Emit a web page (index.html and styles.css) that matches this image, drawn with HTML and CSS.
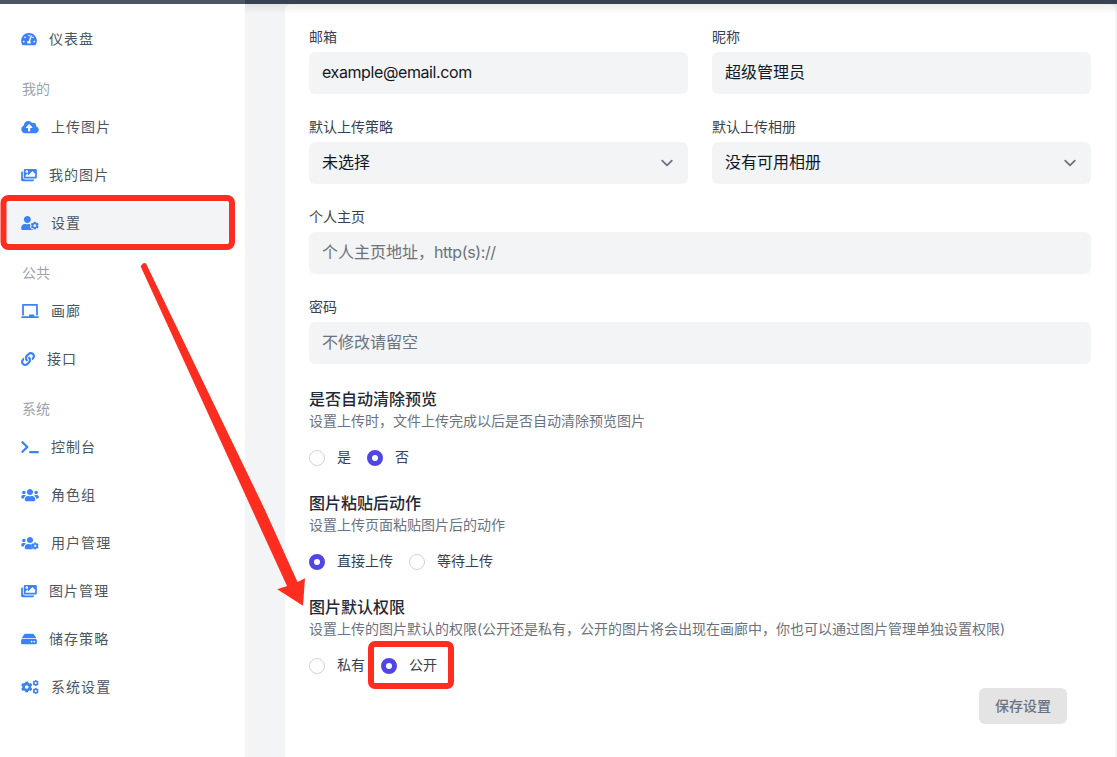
FILE: index.html
```html
<!DOCTYPE html>
<html lang="zh">
<head>
<meta charset="utf-8">
<title>设置</title>
<link rel="stylesheet" href="styles.css">
</head>
<body>
<svg class="defs" width="0" height="0" aria-hidden="true">
  <defs>
    <symbol id="gear" viewBox="352 208 288 288"><path d="M610.5 373.3c2.6-14.1 2.6-28.5 0-42.6l25.8-14.9c3-1.7 4.3-5.2 3.3-8.5-6.7-21.6-18.2-41.2-33.2-57.4-2.3-2.5-6-3.1-9-1.4l-25.8 14.9c-10.9-9.3-23.4-16.5-36.9-21.3v-29.8c0-3.4-2.4-6.4-5.7-7.1-22.3-5-45-4.8-66.2 0-3.3.7-5.7 3.7-5.7 7.1v29.8c-13.5 4.8-26 12-36.9 21.3l-25.8-14.9c-2.9-1.7-6.7-1.1-9 1.4-15 16.2-26.5 35.8-33.2 57.4-1 3.3.4 6.8 3.3 8.5l25.8 14.9c-2.6 14.1-2.6 28.5 0 42.6l-25.8 14.9c-3 1.7-4.3 5.2-3.3 8.5 6.7 21.6 18.2 41.1 33.2 57.4 2.3 2.5 6 3.1 9 1.4l25.8-14.9c10.9 9.3 23.4 16.5 36.9 21.3v29.8c0 3.4 2.4 6.4 5.7 7.1 22.3 5 45 4.8 66.2 0 3.3-.7 5.7-3.7 5.7-7.1v-29.8c13.5-4.8 26-12 36.9-21.3l25.8 14.9c2.9 1.7 6.7 1.1 9-1.4 15-16.2 26.5-35.8 33.2-57.4 1-3.3-.4-6.8-3.3-8.5l-25.8-14.9zM496 400.5c-26.8 0-48.5-21.8-48.5-48.5s21.8-48.5 48.5-48.5 48.5 21.8 48.5 48.5-21.7 48.5-48.5 48.5z"/></symbol>
    <symbol id="images" viewBox="0 0 576 512"><path d="M480 416v16c0 26.51-21.49 48-48 48H48c-26.51 0-48-21.49-48-48V176c0-26.51 21.49-48 48-48h16v208c0 44.112 35.888 80 80 80h336zm96-80V80c0-26.51-21.49-48-48-48H144c-26.51 0-48 21.49-48 48v256c0 26.51 21.49 48 48 48h384c26.51 0 48-21.49 48-48zM256 128c0 26.51-21.49 48-48 48s-48-21.49-48-48 21.49-48 48-48 48 21.49 48 48zm-96 144l55.515-55.515c4.686-4.686 12.284-4.686 16.971 0L272 256l135.515-135.515c4.686-4.686 12.284-4.686 16.971 0L512 208v112H160v-48z"/></symbol>
    <symbol id="chevron" viewBox="0 0 20 20"><path d="M6 8l4 4 4-4" fill="none" stroke="#6b7280" stroke-width="1.5" stroke-linecap="round" stroke-linejoin="round"/></symbol>
  </defs>
</svg>

<div class="topbar"><div class="topbar-left"></div><div class="topbar-right"></div></div>

<div class="shell">
  <aside class="sidebar">
    <a class="nav-item">
      <svg class="icon w16" viewBox="0 0 576 512"><path d="M288 32C128.94 32 0 160.94 0 320c0 52.8 14.25 102.26 39.06 144.8 5.61 9.62 16.3 15.2 27.44 15.2h443c11.14 0 21.83-5.58 27.44-15.2C561.75 422.26 576 372.8 576 320c0-159.06-128.94-288-288-288zm0 64c14.71 0 26.58 10.13 30.32 23.65-1.11 2.26-2.64 4.23-3.45 6.67l-9.22 27.67c-5.13 3.49-10.97 6.01-17.64 6.01-17.67 0-32-14.33-32-32S270.33 96 288 96zM96 384c-17.67 0-32-14.33-32-32s14.33-32 32-32 32 14.33 32 32-14.33 32-32 32zm48-160c-17.67 0-32-14.33-32-32s14.33-32 32-32 32 14.33 32 32-14.33 32-32 32zm246.77-72.41l-61.33 184C343.13 347.33 352 364.54 352 384c0 11.72-3.38 22.55-8.88 32H232.88c-5.5-9.45-8.88-20.28-8.88-32 0-33.94 26.5-61.43 59.9-63.59l61.34-184.01c4.17-12.56 17.73-19.45 30.36-15.17 12.57 4.19 19.35 17.79 15.17 30.36zm14.66 57.2l15.52-46.55c3.47-1.29 7.13-2.23 11.05-2.23 17.67 0 32 14.33 32 32s-14.33 32-32 32c-11.38-.01-20.89-6.28-26.57-15.22zM480 384c-17.67 0-32-14.33-32-32s14.33-32 32-32 32 14.33 32 32-14.33 32-32 32z"/></svg>
      <span>仪表盘</span>
    </a>
    <div class="nav-heading">我的</div>
    <a class="nav-item">
      <svg class="icon w18" viewBox="0 0 640 512"><path d="M537.6 226.6c4.1-10.7 6.4-22.4 6.4-34.6 0-53-43-96-96-96-19.7 0-38.1 6-53.3 16.2C367 64.2 315.3 32 256 32c-88.4 0-160 71.6-160 160 0 2.7.1 5.4.2 8.1C40.2 219.8 0 273.2 0 336c0 79.5 64.5 144 144 144h368c70.7 0 128-57.3 128-128 0-61.9-44-113.6-102.4-125.4zM393.4 288H328v112c0 8.8-7.2 16-16 16h-48c-8.8 0-16-7.2-16-16V288h-65.4c-14.3 0-21.4-17.2-11.3-27.3l105.4-105.4c6.2-6.2 16.4-6.2 22.6 0l105.4 105.4c10.1 10.1 2.9 27.3-11.3 27.3z"/></svg>
      <span>上传图片</span>
    </a>
    <a class="nav-item">
      <svg class="icon w16"><use href="#images"/></svg>
      <span>我的图片</span>
    </a>
    <a class="nav-item active">
      <svg class="icon w18" viewBox="0 0 640 512"><path d="M224 256c70.7 0 128-57.3 128-128S294.7 0 224 0 96 57.3 96 128s57.3 128 128 128zm201.2 226.5c-2.3-1.2-4.6-2.6-6.8-3.9l-7.9 4.6c-6 3.4-12.8 5.3-19.6 5.3-10.9 0-21.4-4.6-28.9-12.6-18.3-19.8-32.3-43.9-40.2-69.6-5.5-17.7 1.9-36.4 17.9-45.7l7.9-4.6c-.1-2.6-.1-5.2 0-7.8l-7.9-4.6c-16-9.2-23.4-28-17.9-45.7.9-2.9 2.2-5.8 3.2-8.7-3.8-.3-7.5-1.2-11.4-1.2h-16.7c-22.2 10.2-46.9 16-72.9 16s-50.6-5.8-72.9-16h-16.7C60.2 288 0 348.2 0 422.4V464c0 26.5 21.5 48 48 48h352c10.1 0 19.5-3.2 27.2-8.5-1.2-3.8-2-7.7-2-11.8v-9.2z"/><use href="#gear" x="352" y="208" width="288" height="288"/></svg>
      <span>设置</span>
    </a>
    <div class="nav-heading">公共</div>
    <a class="nav-item">
      <svg class="icon w18" viewBox="0 0 640 512"><path d="M96 64h448v352h64V40c0-22.06-17.94-40-40-40H72C49.94 0 32 17.94 32 40v376h64V64zm528 384H480v-64H288v64H16c-8.84 0-16 7.16-16 16v32c0 8.84 7.16 16 16 16h608c8.84 0 16-7.16 16-16v-32c0-8.84-7.16-16-16-16z"/></svg>
      <span>画廊</span>
    </a>
    <a class="nav-item">
      <svg class="icon w14" viewBox="0 0 512 512"><path d="M326.612 185.391c59.747 59.809 58.927 155.698.36 214.59-.11.12-.24.25-.36.37l-67.2 67.2c-59.27 59.27-155.699 59.262-214.96 0-59.27-59.26-59.27-155.7 0-214.96l37.106-37.106c9.84-9.84 26.786-3.3 27.294 10.606.648 17.722 3.826 35.527 9.69 52.721 1.986 5.822.567 12.262-3.783 16.612l-13.087 13.087c-28.026 28.026-28.905 73.66-1.155 101.96 28.024 28.579 74.086 28.749 102.325.51l67.2-67.19c28.191-28.191 28.073-73.757 0-101.83-3.701-3.694-7.429-6.564-10.341-8.569a16.037 16.037 0 0 1-6.947-12.606c-.396-10.567 3.348-21.456 11.698-29.806l21.054-21.055c5.521-5.521 14.182-6.199 20.584-1.731a152.482 152.482 0 0 1 20.522 17.197zM467.547 44.449c-59.261-59.262-155.69-59.27-214.96 0l-67.2 67.2c-.12.12-.25.25-.36.37-58.566 58.892-59.387 154.781.36 214.59a152.454 152.454 0 0 0 20.521 17.196c6.402 4.468 15.064 3.789 20.584-1.731l21.054-21.055c8.35-8.35 12.094-19.239 11.698-29.806a16.037 16.037 0 0 0-6.947-12.606c-2.912-2.005-6.64-4.875-10.341-8.569-28.073-28.073-28.191-73.639 0-101.83l67.2-67.19c28.239-28.239 74.3-28.069 102.325.51 27.75 28.3 26.872 73.934-1.155 101.96l-13.087 13.087c-4.35 4.35-5.769 10.79-3.783 16.612 5.864 17.194 9.042 34.999 9.69 52.721.509 13.906 17.454 20.446 27.294 10.606l37.106-37.106c59.271-59.259 59.271-155.699.001-214.959z"/></svg>
      <span>接口</span>
    </a>
    <div class="nav-heading">系统</div>
    <a class="nav-item">
      <svg class="icon w18" viewBox="0 0 640 512"><path d="M257.981 272.971L63.638 467.314c-9.373 9.373-24.569 9.373-33.941 0L7.029 444.647c-9.357-9.357-9.375-24.522-.04-33.901L161.011 256 6.99 101.255c-9.335-9.379-9.317-24.544.04-33.901l22.667-22.667c9.373-9.373 24.569-9.373 33.941 0L257.981 239.03c9.373 9.372 9.373 24.568 0 33.941zM640 456v-32c0-13.255-10.745-24-24-24H312c-13.255 0-24 10.745-24 24v32c0 13.255 10.745 24 24 24h304c13.255 0 24-10.745 24-24z"/></svg>
      <span>控制台</span>
    </a>
    <a class="nav-item">
      <svg class="icon w18" viewBox="0 0 640 512"><path d="M96 224c35.3 0 64-28.7 64-64s-28.7-64-64-64-64 28.7-64 64 28.7 64 64 64zm448 0c35.3 0 64-28.7 64-64s-28.7-64-64-64-64 28.7-64 64 28.7 64 64 64zm32 32h-64c-17.6 0-33.5 7.1-45.1 18.6 40.3 22.1 68.9 62 75.1 109.4h66c17.7 0 32-14.3 32-32v-32c0-35.3-28.7-64-64-64zm-256 0c61.9 0 112-50.1 112-112S381.9 32 320 32 208 82.1 208 144s50.1 112 112 112zm76.8 32h-8.3c-20.8 10-43.9 16-68.5 16s-47.6-6-68.5-16h-8.3C179.6 288 128 339.6 128 403.2V432c0 26.5 21.5 48 48 48h288c26.5 0 48-21.5 48-48v-28.8c0-63.6-51.6-115.2-115.2-115.2zm-223.7-13.4C161.5 263.1 145.6 256 128 256H64c-35.3 0-64 28.7-64 64v32c0 17.7 14.3 32 32 32h65.9c6.3-47.4 34.9-87.3 75.2-109.4z"/></svg>
      <span>角色组</span>
    </a>
    <a class="nav-item">
      <svg class="icon w18" viewBox="0 0 640 512"><path d="M96 224c35.3 0 64-28.7 64-64s-28.7-64-64-64-64 28.7-64 64 28.7 64 64 64zm-32 32c-35.3 0-64 28.7-64 64v32c0 17.7 14.3 32 32 32h65.9c6.3-47.4 34.9-87.3 75.2-109.4C161.5 263.1 145.6 256 128 256H64z"/><path d="M320 256c61.9 0 112-50.1 112-112S381.9 32 320 32 208 82.1 208 144s50.1 112 112 112zm76.8 32h-8.3c-20.8 10-43.9 16-68.5 16s-47.6-6-68.5-16h-8.3C179.6 288 128 339.6 128 403.2V432c0 26.5 21.5 48 48 48h288c26.5 0 48-21.5 48-48v-28.8c0-63.6-51.6-115.2-115.2-115.2z"/><use class="gear-cut" href="#gear" x="376" y="232" width="264" height="264"/></svg>
      <span>用户管理</span>
    </a>
    <a class="nav-item">
      <svg class="icon w16"><use href="#images"/></svg>
      <span>图片管理</span>
    </a>
    <a class="nav-item">
      <svg class="icon w16" viewBox="0 0 576 512"><path d="M576 304v96c0 26.51-21.49 48-48 48H48c-26.51 0-48-21.49-48-48v-96c0-26.51 21.49-48 48-48h480c26.51 0 48 21.49 48 48zm-48-80a79.557 79.557 0 0 1 30.777 6.165L462.25 85.374A48.003 48.003 0 0 0 422.311 64H153.689a48 48 0 0 0-39.938 21.374L17.223 230.165A79.557 79.557 0 0 1 48 224h480zm-48 96c-17.673 0-32 14.327-32 32s14.327 32 32 32 32-14.327 32-32-14.327-32-32-32zm-96 0c-17.673 0-32 14.327-32 32s14.327 32 32 32 32-14.327 32-32-14.327-32-32-32z"/></svg>
      <span>储存策略</span>
    </a>
    <a class="nav-item">
      <svg class="icon w18" viewBox="0 0 640 512"><use href="#gear" x="0" y="56" width="400" height="400"/><use href="#gear" x="415" y="0" width="225" height="225"/><use href="#gear" x="415" y="287" width="225" height="225"/></svg>
      <span>系统设置</span>
    </a>
  </aside>

  <main class="main">
    <form class="card">
      <div class="field-grid">
        <div class="field">
          <label class="label">邮箱</label>
          <div class="control latin"><span class="tight">example@email.com</span></div>
        </div>
        <div class="field">
          <label class="label">昵称</label>
          <div class="control">超级管理员</div>
        </div>
        <div class="field">
          <label class="label">默认上传策略</label>
          <div class="control select"><span>未选择</span><svg class="chevron"><use href="#chevron"/></svg></div>
        </div>
        <div class="field">
          <label class="label">默认上传相册</label>
          <div class="control select"><span>没有可用相册</span><svg class="chevron"><use href="#chevron"/></svg></div>
        </div>
        <div class="field wide">
          <label class="label">个人主页</label>
          <div class="control placeholder"><span>个人主页地址，<span class="tight">http(s)://</span></span></div>
        </div>
        <div class="field wide">
          <label class="label">密码</label>
          <div class="control placeholder">不修改请留空</div>
        </div>
      </div>

      <section class="option">
        <h3 class="option-title">是否自动清除预览</h3>
        <p class="option-desc">设置上传时，文件上传完成以后是否自动清除预览图片</p>
        <div class="radios">
          <div class="radio"><i class="dot"></i><span class="radio-text">是</span></div>
          <div class="radio"><i class="dot on"></i><span class="radio-text">否</span></div>
        </div>
      </section>
      <section class="option">
        <h3 class="option-title">图片粘贴后动作</h3>
        <p class="option-desc">设置上传页面粘贴图片后的动作</p>
        <div class="radios">
          <div class="radio"><i class="dot on"></i><span class="radio-text">直接上传</span></div>
          <div class="radio"><i class="dot"></i><span class="radio-text">等待上传</span></div>
        </div>
      </section>
      <section class="option">
        <h3 class="option-title">图片默认权限</h3>
        <p class="option-desc">设置上传的图片默认的权限(公开还是私有，公开的图片将会出现在画廊中，你也可以通过图片管理单独设置权限)</p>
        <div class="radios">
          <div class="radio"><i class="dot"></i><span class="radio-text">私有</span></div>
          <div class="radio"><i class="dot on"></i><span class="radio-text">公开</span></div>
        </div>
      </section>

      <div class="actions"><span class="save">保存设置</span></div>
    </form>
  </main>
</div>

<svg class="annotations" viewBox="0 0 1117 757" aria-hidden="true">
  <rect class="mark" x="3.5" y="198" width="228.5" height="49" rx="5"/>
  <rect class="mark" x="371" y="644" width="80" height="42" rx="4"/>
  <path class="arrow" d="M140.7 266.5L287 586L277.3 589.3L303 605.7L305 578.3L297.5 582L265 510L146 263.5Q143 261.5 140.7 266.5Z"/>
</svg>
</body>
</html>
```
FILE: styles.css
```css
* { box-sizing: border-box; }
html, body { margin: 0; height: 100%; overflow: hidden; }
body {
  position: relative;
  width: 1117px;
  height: 757px;
  background: #f3f4f6;
  font-family: Inter, "Noto Sans CJK SC", sans-serif;
  font-size: 14px;
  color: #111827;
}
.defs { position: absolute; }
.topbar { display: flex; height: 4px; }
.topbar-left { width: 245px; background: #4b5563; }
.topbar-right { flex: 1; background: #374151; }

.shell { display: flex; height: 753px; }

.sidebar {
  display: flex;
  flex-direction: column;
  flex: none;
  width: 245px;
  padding: 11px 16px 0 6px;
  background: #fff;
}
.nav-item {
  display: flex;
  align-items: center;
  flex: none;
  gap: 12px;
  height: 40px;
  margin: 4px 0;
  padding-left: 15px;
  border-radius: 6px;
  color: #4b5563;
  letter-spacing: 1.05px;
  line-height: 20px;
}
.nav-item.active { background: #f3f4f6; }
.nav-heading {
  flex: none;
  margin: 16px 0 4px;
  padding-left: 16px;
  color: #9ca3af;
  line-height: 20px;
}
.icon { flex: none; height: 14px; fill: #3b82f6; }
.w14 { width: 14px; }
.w16 { width: 16px; }
.w18 { width: 18px; }
.gear-cut { stroke: #fff; stroke-width: 34px; paint-order: stroke; }

.main { position: relative; flex: 1; padding: 0 2px 0 40px; min-width: 0; }
.main::before {
  content: "";
  position: absolute;
  left: 0;
  right: 0;
  top: 0;
  height: 10px;
  background: linear-gradient(rgba(0, 0, 0, .07), rgba(0, 0, 0, 0));
}
.card {
  height: 100%;
  padding: 24px 24px 0;
  background: #fff;
  border-radius: 6px 6px 0 0;
}
.field-grid {
  display: grid;
  grid-template-columns: 1fr 1fr;
  gap: 24px;
}
.wide { grid-column: span 2; }
.label {
  display: block;
  margin-bottom: 6px;
  color: #374151;
  line-height: 18px;
}
.control {
  display: flex;
  align-items: center;
  justify-content: space-between;
  height: 42px;
  padding: 0 13px 4px;
  border-radius: 6px;
  background: #f3f4f6;
  font-size: 16px;
  color: #111827;
}
.latin { padding-bottom: 2px; }
.tight { letter-spacing: -.4px; }
.placeholder { color: #6b7280; }
.select { padding-right: 9px; }
.chevron { width: 24px; height: 24px; margin-top: 4px; }

.option { margin-top: 24px; }
.option-title {
  margin: 0 0 2px;
  font-size: 16px;
  font-weight: 500;
  line-height: 22px;
  color: #1f2937;
}
.option-desc { margin: 0; color: #6b7280; line-height: 18px; }
.radios { display: flex; gap: 16px; margin-top: 18px; }
.radio {
  display: flex;
  align-items: center;
  gap: 12px;
  height: 20px;
  color: #374151;
}
.radio-text { margin-bottom: 5px; }
.dot {
  width: 16px;
  height: 16px;
  border: 1px solid #d1d5db;
  border-radius: 50%;
  background: #fff;
}
.dot.on { border: 5px solid #4f46e5; }

.actions { display: flex; justify-content: flex-end; margin-top: 12px; padding-right: 24px; }
.save {
  display: flex;
  align-items: center;
  justify-content: center;
  width: 88px;
  height: 36px;
  padding-bottom: 2px;
  border-radius: 6px;
  background: #e4e4e5;
  color: #6b7280;
  font-weight: 500;
}

.annotations {
  position: absolute;
  left: 0;
  top: 0;
  width: 1117px;
  height: 757px;
  pointer-events: none;
}
.mark { fill: none; stroke: #ff2d20; stroke-width: 6; }
.arrow { fill: #ff2d20; }
```
